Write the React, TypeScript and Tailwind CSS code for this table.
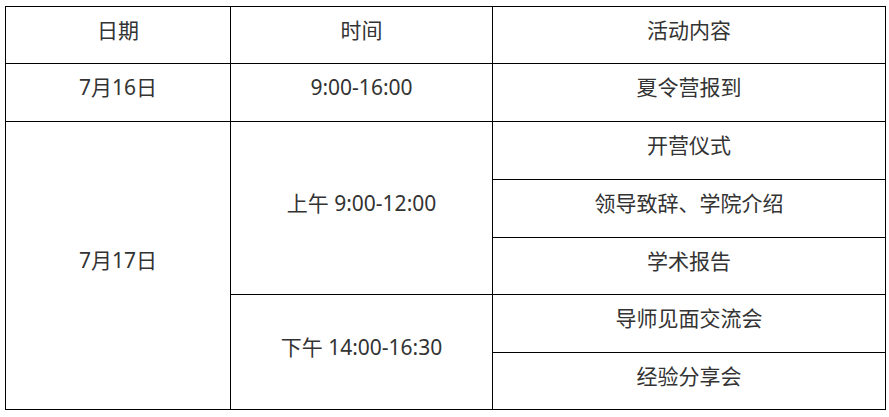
const rows = [
  { key: "a", left: "开营仪式" },
  { key: "b", left: "领导致辞、学院介绍" },
  { key: "c", left: "学术报告" },
  { key: "d", left: "导师见面交流会" },
  { key: "e", left: "经验分享会" },
];

const cell = "border border-black text-center align-middle px-0 pt-0 pb-[11px] leading-[24px]";

export default function App() {
  return (
    <div className="w-[889px] h-[417px] bg-white pl-[5px] pt-[6px] text-[21px] text-[#333] font-['Noto_Sans','Noto_Sans_CJK_SC',sans-serif]">
      <table className="border-collapse table-fixed w-[880px]">
        <colgroup>
          <col className="w-[225px]" />
          <col className="w-[262px]" />
          <col className="w-[393px]" />
        </colgroup>
        <tbody>
          <tr className="h-[57px]">
            <td className={cell}>日期</td>
            <td className={cell}>时间</td>
            <td className={cell}>活动内容</td>
          </tr>
          <tr className="h-[58px]">
            <td className={cell}>7月16日</td>
            <td className={cell}>9:00-16:00</td>
            <td className={cell}>夏令营报到</td>
          </tr>
          <tr className="h-[58px]">
            <td className={cell} rowSpan={5}>7月17日</td>
            <td className={cell} rowSpan={3}>上午 9:00-12:00</td>
            <td className={cell}>{rows[0].left}</td>
          </tr>
          <tr className="h-[58px]">
            <td className={cell}>{rows[1].left}</td>
          </tr>
          <tr className="h-[57px]">
            <td className={cell}>{rows[2].left}</td>
          </tr>
          <tr className="h-[58px]">
            <td className={cell} rowSpan={2}>下午 14:00-16:30</td>
            <td className={cell}>{rows[3].left}</td>
          </tr>
          <tr className="h-[57px]">
            <td className={cell}>{rows[4].left}</td>
          </tr>
        </tbody>
      </table>
    </div>
  );
}
